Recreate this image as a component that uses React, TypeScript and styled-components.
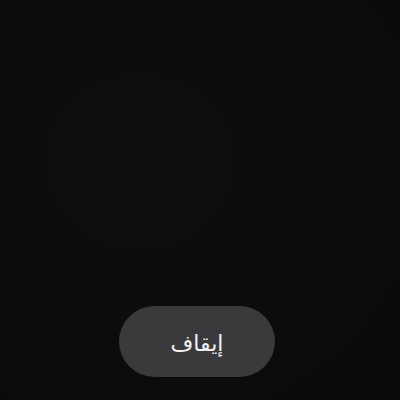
import React from "react";
import styled, { createGlobalStyle } from "styled-components";

const Global = createGlobalStyle`
  html, body { margin: 0; padding: 0; }
  body { background: #0b0b0d; }
`;

const Screen = styled.div`
  width: 400px;
  height: 400px;
  box-sizing: border-box;
  display: flex;
  flex-direction: column;
  justify-content: flex-end;
  align-items: center;
  padding: 0 6px 23px 0;
  background: radial-gradient(120% 110% at 35% 40%, #0e0e10 0%, #0b0b0d 60%, #070708 100%);
`;

const StopButton = styled.button`
  width: 156px;
  height: 71px;
  border: none;
  border-radius: 36px;
  background: #3a3a3c;
  color: #f2f2f2;
  font-family: "Noto Sans", "DejaVu Sans", sans-serif;
  font-size: 22px;
  font-weight: 500;
  display: flex;
  align-items: center;
  justify-content: center;
  padding: 0;
  cursor: pointer;
`;

export default function App() {
  return (
    <>
      <Global />
      <Screen>
        <StopButton dir="rtl">إيقاف</StopButton>
      </Screen>
    </>
  );
}
